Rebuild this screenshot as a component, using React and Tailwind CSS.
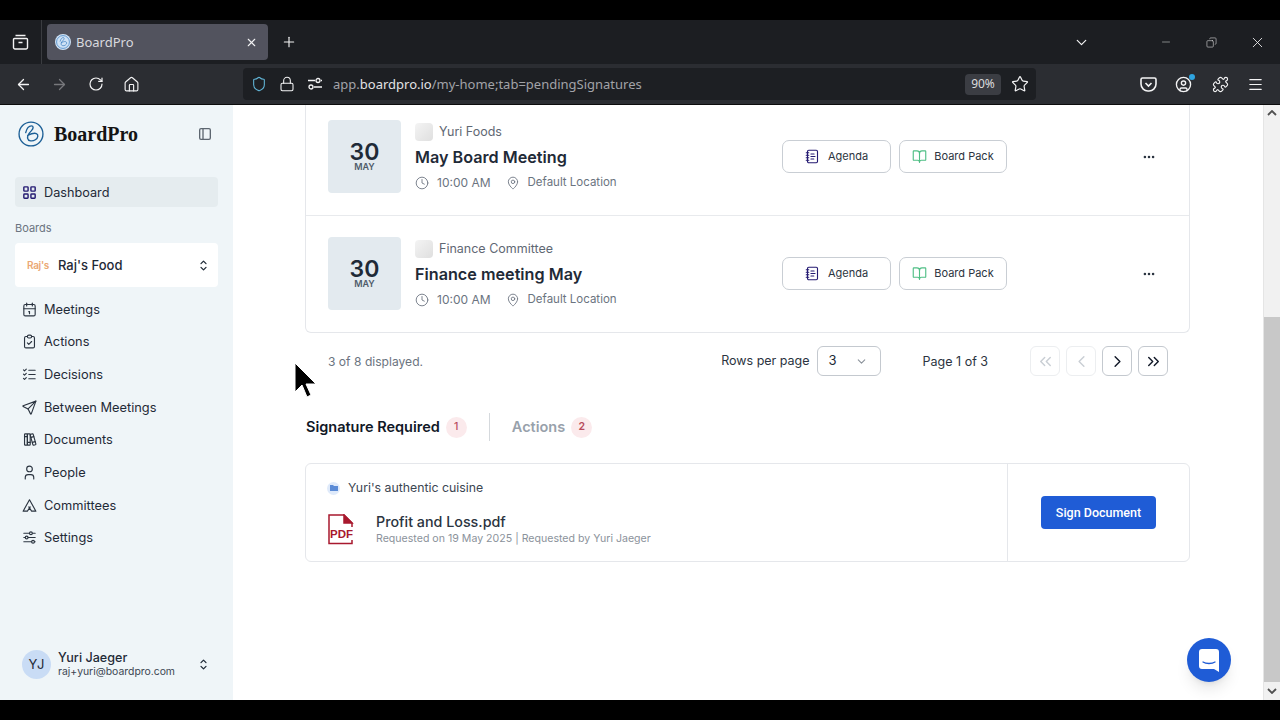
import React from "react";
import {
  ArrowLeft, ArrowRight, RotateCw, House, Lock, Star, CircleUser, Puzzle, Menu, X, Plus, ChevronDown, Minus,
  ChevronLeft, ChevronRight, ChevronsLeft, ChevronsRight, Ellipsis, MapPin, Clock, BookOpen, NotebookText, Shield, Copy,
} from "lucide-react";
import { TbLayoutGrid, TbCalendar, TbClipboardCheck, TbListCheck, TbSend, TbBooks, TbUser, TbTent, TbAdjustmentsHorizontal, TbSelector, TbLayoutSidebar } from "react-icons/tb";

const Logo = ({ size = 27, color = "#1c5f96" }) => (
  <svg width={size} height={size} viewBox="0 0 27 27" fill="none" stroke={color} strokeWidth="1.4">
    <circle cx="13.5" cy="13.5" r="12.4" />
    <path d="M8 12c1-4 3-7 6-7 2 0 2.500 2.500 0 5-2 2-4.500 5-4 8 .5 3 5 3.500 8 1.500 3-2 3.500-5.500 1-6.500-2.500-1-6 .5-9 2" strokeLinecap="round" />
  </svg>
);

const nav = [
  ["Meetings", TbCalendar], ["Actions", TbClipboardCheck], ["Decisions", TbListCheck], ["Between Meetings", TbSend],
  ["Documents", TbBooks], ["People", TbUser], ["Committees", TbTent], ["Settings", TbAdjustmentsHorizontal],
];

const Chrome = () => (
  <div className="shrink-0" style={{ fontFamily: "'Noto Sans', sans-serif" }}>
    <div className="h-5 bg-black" />
    <div className="h-11 bg-[#1c1e22] flex items-center text-[#f3f3f4]">
      <div className="w-[42px] h-full flex items-center justify-center border-r border-[#3a3c40]">
        <svg width="17" height="16" viewBox="0 0 17 16" fill="none" stroke="currentColor" strokeWidth="1.4"><path d="M3.500 1.500h10M2.500 4.500h12a1 1 0 0 1 1 1v8a1.500 1.500 0 0 1-1.500 1.500H3A1.500 1.500 0 0 1 1.500 13.500v-8a1 1 0 0 1 1-1zM6.500 8.500h4" /></svg>
      </div>
      <div className="ml-[5px] w-[221px] h-9 bg-[#52535e] rounded flex items-center pl-2 pr-[10px]">
        <div className="w-4 h-4 rounded-full bg-[#cfe2f5] flex items-center justify-center"><Logo size={14} color="#3f7fc0" /></div>
        <span className="ml-[5px] pt-px text-[13px] text-[#d9d9de] flex-1">BoardPro</span>
        <X size={13} strokeWidth={2} />
      </div>
      <Plus size={16} strokeWidth={1.7} className="ml-[13px]" />
      <div className="flex-1" />
      <ChevronDown size={17} strokeWidth={1.7} className="mr-[70px]" />
      <Minus size={12} strokeWidth={1.2} className="mr-[34px] text-[#c8c9cb]" />
      <Copy size={11} strokeWidth={1.3} className="mr-[32px] scale-x-[-1] text-[#dcdcde]" />
      <X size={17} strokeWidth={1.2} className="mr-[14px]" />
    </div>
    <div className="h-[41px] bg-[#2b2d32] border-b border-[#0c0c0d] flex items-center text-[#f4f4f5]">
      <ArrowLeft size={17} strokeWidth={1.8} className="ml-[15px]" />
      <ArrowRight size={17} strokeWidth={1.8} className="ml-[19px] text-[#77787c]" />
      <RotateCw size={16} strokeWidth={1.8} className="ml-[20px]" />
      <House size={17} strokeWidth={1.6} className="ml-[19px]" />
      <div className="ml-[103px] w-[793px] h-8 bg-[#1d1f23] rounded flex items-center pl-2 pr-[7px]">
        <Shield size={16} strokeWidth={1.6} className="text-[#62b6d8]" />
        <Lock size={16} strokeWidth={1.6} className="ml-3" />
        <svg className="ml-[12px]" width="16" height="14" viewBox="0 0 16 14" fill="none" stroke="currentColor" strokeWidth="1.3"><circle cx="11" cy="3.500" r="2" /><circle cx="4" cy="10" r="2" /><path d="M1 3.500h7M14 3.500h1M7 10h8" /></svg>
        <span className="ml-[10px] pt-[2px] text-[13px] text-[#a2a3a8]">app.<span className="text-[#e2e2e5]">boardpro.io</span>/my-home;tab=pendingSignatures</span>
        <div className="flex-1" />
        <span className="w-9 h-[21px] bg-[#3b3d43] rounded text-[12px] text-[#dcdcde] flex items-center justify-center">90%</span>
        <Star size={18} strokeWidth={1.6} className="ml-[10px]" />
      </div>
      <svg className="ml-[104px]" width="17" height="15" viewBox="0 0 17 15" fill="none" stroke="currentColor" strokeWidth="1.6"><path d="M2.500 1h12A1.500 1.500 0 0 1 16 2.500V7a7 7 0 0 1-7.500 7A7 7 0 0 1 1 7V2.500A1.500 1.500 0 0 1 2.500 1zM5.500 6l3 3 3-3" /></svg>
      <div className="relative ml-[18px]">
        <CircleUser size={17} strokeWidth={1.9} />
        <span className="absolute -top-[2px] -right-[3px] w-[6px] h-[6px] rounded-full bg-[#2fa4e0]" />
      </div>
      <Puzzle size={17} strokeWidth={1.6} className="ml-[20px]" />
      <Menu size={17} strokeWidth={1.7} className="ml-[18px]" />
    </div>
  </div>
);

const Sidebar = () => (
  <aside className="w-[233px] shrink-0 bg-[#eff5f8] flex flex-col pt-4 text-[#1f2a37]">
    <div className="h-[26px] flex items-center pl-[18px] pr-[20px]">
      <Logo size={26} />
      <span className="ml-[10px] flex-1 text-[20px] font-bold text-[#141414]" style={{ fontFamily: "'Liberation Serif', serif" }}>BoardPro</span>
      <TbLayoutSidebar size={16} className="text-[#5d6670]" />
    </div>
    <div className="mx-[15px] mt-[30px] h-[30px] rounded bg-[#e5ecef] flex items-center pl-[6px] gap-[6px]">
      <TbLayoutGrid size={17} className="text-[#241a72]" />
      <span className="pt-px text-[12.7px]">Dashboard</span>
    </div>
    <div className="ml-[15px] mt-[13px] h-4 flex items-center text-[11px] text-[#6b7480]">Boards</div>
    <div className="mx-[15px] mt-[7px] h-11 rounded bg-white flex items-center pl-[12px] pr-[7px]">
      <span className="text-[10px] font-semibold text-[#eba874] w-[22px] whitespace-nowrap tracking-[-0.3px]">Raj's</span>
      <span className="ml-[9px] pt-px flex-1 text-[13px] font-medium">Raj's Food</span>
      <TbSelector size={15} />
    </div>
    <div className="mt-[5.8px]">
      {nav.map(([label, Icon]) => (
        <div key={label} className="h-[32.7px] flex items-center pl-[21px] gap-[6px]">
          <Icon size={17} strokeWidth={1.6} className="text-[#2b3440]" />
          <span className="text-[12.8px]">{label}</span>
        </div>
      ))}
    </div>
    <div className="mt-auto mb-[21px] flex items-center pl-[22px] pr-[22px]">
      <div className="w-[29px] h-[29px] rounded-full bg-[#c9dcf5] flex items-center justify-center text-[13px]">YJ</div>
      <div className="ml-[7px] flex-1 leading-none">
        <div className="text-[12.6px] font-medium leading-[15px]">Yuri Jaeger</div>
        <div className="text-[10.400px] leading-[14px] text-[#3c4652]">raj+yuri@boardpro.com</div>
      </div>
      <TbSelector size={15} />
    </div>
  </aside>
);

const Row = ({ org, title, pt, pb, border }) => (
  <div className={`flex items-center pl-[22px] pr-[32px] ${pt} ${pb} ${border}`}>
    <div className="w-[73px] h-[73px] rounded bg-[#e3eaef] flex flex-col items-center justify-center text-[#1f2a37]">
      <span className="text-[23px] font-semibold leading-[24px]">30</span>
      <span className="-mt-[3px] text-[9px] font-semibold leading-[12px] text-[#4f5b69]">MAY</span>
    </div>
    <div className="ml-[14px] flex-1 self-start pt-[3px]">
      <div className="flex items-center h-[18px]">
        <div className="w-[18px] h-[18px] rounded-sm bg-gradient-to-br from-[#f4f4f4] to-[#dfdfdf]" />
        <span className="ml-[6px] pt-px text-[12.500px] text-[#5f6874]">{org}</span>
      </div>
      <div className="mt-[5px] text-[16.200px] font-semibold leading-[22px] text-[#1f2a37]">{title}</div>
      <div className="mt-[5px] flex items-center h-[20px] text-[12px] text-[#6b7480]">
        <Clock size={14} strokeWidth={1.5} />
        <span className="ml-[8px]">10:00 AM</span>
        <MapPin size={14} strokeWidth={1.5} className="ml-[15px]" />
        <span className="ml-[8px] text-[11.500px]">Default Location</span>
      </div>
    </div>
    <button className="w-[109px] h-[33px] rounded-[7px] border border-[#c9ced4] flex items-center justify-center gap-[8px] text-[11px] text-[#2b3440]">
      <NotebookText size={15} strokeWidth={1.8} className="text-[#241a72]" />Agenda
    </button>
    <button className="ml-2 mr-[1px] w-[108px] h-[33px] rounded-[7px] border border-[#c9ced4] flex items-center justify-center gap-[7px] text-[11px] text-[#2b3440]">
      <BookOpen size={15} strokeWidth={1.8} className="text-[#4fbf85]" />Board Pack
    </button>
    <Ellipsis size={14} strokeWidth={2.4} className="ml-[134px] mr-[1px] text-[#2b3440]" />
  </div>
);

const PageBtn = ({ Icon, off }) => (
  <div className={`w-[30px] h-[30px] rounded-md border flex items-center justify-center ${off ? "border-[#eceef0] text-[#c9ced4]" : "border-[#c4c9cf] text-[#111827]"}`}>
    <Icon size={19} strokeWidth={1.8} />
  </div>
);

const Main = () => (
  <main className="flex-1 bg-white pl-[72px] pr-[73px] text-[#1f2a37]">
    <div className="border border-t-0 border-[#e5e7eb] rounded-b-md">
      <Row org="Yuri Foods" title="May Board Meeting" pt="pt-[15px]" pb="pb-[22px]" border="border-b border-[#e8eaed]" />
      <Row org="Finance Committee" title="Finance meeting May" pt="pt-[21px]" pb="pb-[22px]" border="" />
    </div>
    <div className="mt-[13px] h-[30px] flex items-center pl-[23px] pr-[22px]">
      <span className="pt-[2px] text-[12.100px] text-[#6b7480] flex-1">3 of 8 displayed.</span>
      <span className="pt-px text-[12.500px] text-[#2b3440]">Rows per page</span>
      <div className="ml-[7px] w-16 h-[30px] rounded-md border border-[#c4c9cf] flex items-center justify-between pl-[11px] pr-[12px] text-[13px]">
        3<ChevronDown size={13} className="text-[#8b929b]" />
      </div>
      <span className="ml-[42px] pt-[2px] text-[12.500px] text-[#2b3440]">Page 1 of 3</span>
      <div className="ml-[42px] flex gap-[6px]">
        <PageBtn Icon={ChevronsLeft} off />
        <PageBtn Icon={ChevronLeft} off />
        <PageBtn Icon={ChevronRight} />
        <PageBtn Icon={ChevronsRight} />
      </div>
    </div>
    <div className="mt-[37px] h-7 flex items-center pl-px">
      <span className="text-[14.500px] font-semibold text-[#111827]">Signature Required</span>
      <span className="ml-[6px] w-[21px] h-[21px] rounded-full bg-[#fbeaec] flex items-center justify-center text-[10.500px] font-medium text-[#b84a5c]">1</span>
      <div className="ml-[22px] w-px h-7 bg-[#d5d9dd]" />
      <span className="ml-[22px] text-[14.500px] font-semibold text-[#98a1ab]">Actions</span>
      <span className="ml-[6px] w-[21px] h-[21px] rounded-full bg-[#fbeaec] flex items-center justify-center text-[10.500px] font-semibold text-[#b84a5c]">2</span>
    </div>
    <div className="mt-[22px] h-[99px] border border-[#e5e7eb] rounded-md flex">
      <div className="flex-1 pl-[21px] pt-[15px]">
        <div className="flex items-center h-[18px]">
          <div className="w-[13px] h-[13px] rounded-full bg-[#dfeafa] flex items-center justify-center">
            <svg width="8" height="8" viewBox="0 0 8 8" fill="#5b8bd6"><path d="M0 1h3l1 1h4v5H0z" /></svg>
          </div>
          <span className="ml-2 text-[12.300px] text-[#3c4652]">Yuri's authentic cuisine</span>
        </div>
        <div className="mt-[16px] ml-px flex items-center">
          <svg width="27" height="31" viewBox="0 0 27 31" fill="none" stroke="#a8192e" strokeWidth="1.5">
            <path d="M24 13V9L16 1H1v28.500h23V26" />
            <path d="M16 1v8h8z" fill="#a8192e" />
            <text x="2" y="24" fontSize="11.500" fontWeight="700" fill="#a8192e" stroke="none" fontFamily="'Liberation Sans', sans-serif">PDF</text>
          </svg>
          <div className="ml-[21px]">
            <div className="text-[14.300px] font-medium leading-[18px] text-[#2b3440]">Profit and Loss.pdf</div>
            <div className="text-[10.600px] leading-[15px] text-[#8b929b]">Requested on 19 May 2025 | Requested by Yuri Jaeger</div>
          </div>
        </div>
      </div>
      <div className="w-[182px] border-l border-[#e5e7eb] flex items-center justify-center">
        <button className="w-[115px] h-[33px] rounded bg-[#1f5cd6] text-white text-[12.500px] font-medium pt-px" style={{ fontFamily: "Roboto, sans-serif" }}>Sign Document</button>
      </div>
    </div>
  </main>
);

const Scrollbar = () => (
  <div className="w-[17px] shrink-0 bg-[#f1f1f1] border-l border-[#e5e5e5] flex flex-col items-center">
    <svg className="mt-[5px]" width="10" height="6" viewBox="0 0 10 6" fill="none" stroke="#505050" strokeWidth="1.800"><path d="M1 5l4-4 4 4" /></svg>
    <div className="mt-[201px] w-full h-[365px] bg-[#c8c8c8]" />
    <svg className="mt-[6px]" width="10" height="6" viewBox="0 0 10 6" fill="none" stroke="#505050" strokeWidth="1.800"><path d="M1 1l4 4 4-4" /></svg>
  </div>
);

export default function App() {
  return (
    <div className="relative w-[1280px] h-[720px] overflow-hidden bg-black flex flex-col" style={{ fontFamily: "Inter, sans-serif" }}>
      <Chrome />
      <div className="flex-1 min-h-0 flex overflow-hidden">
        <Sidebar />
        <Main />
        <Scrollbar />
      </div>
      <div className="h-5 shrink-0 bg-black" />
      <div className="absolute left-[1187px] top-[638px] w-11 h-11 rounded-full bg-[#1f5cd6] shadow-lg flex items-center justify-center">
        <svg width="20" height="23" viewBox="0 0 20 23" fill="#fff"><path d="M3 0h14a3 3 0 0 1 3 3v20l-5-3H3a3 3 0 0 1-3-3V3a3 3 0 0 1 3-3z" /><path d="M4 13c3 2 9 2 12 0" stroke="#1f5cd6" strokeWidth="1.300" fill="none" strokeLinecap="round" /></svg>
      </div>
      <svg className="absolute left-[293px] top-[361px]" width="25" height="38" viewBox="0 0 25 38" fill="#000" stroke="#fff" strokeWidth="1">
        <path d="M2 2v29l7-7 5 12 4-2-5-11h10z" />
      </svg>
    </div>
  );
}
